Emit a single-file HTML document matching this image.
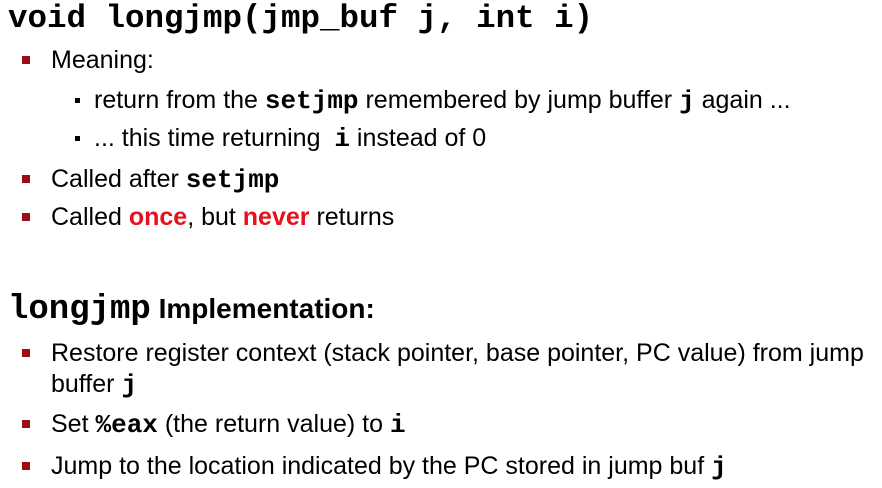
<!DOCTYPE html>
<html><head><meta charset="utf-8"><style>
body{margin:0;width:882px;height:488px;background:#fff;overflow:hidden;position:relative;font-family:"Liberation Sans",sans-serif;color:#000}
.l{position:absolute;white-space:nowrap;font-size:25px;line-height:28px;letter-spacing:0}
.m{font-family:"Liberation Mono",monospace;font-weight:bold;font-size:26px;letter-spacing:0}
.b{position:absolute;width:8px;height:8px;background:#9b0d13}
.s{position:absolute;width:5px;height:5px;background:#000}
.r{color:#e8101a;font-weight:bold}
</style></head><body>
<div class="l m" style="left:8px;top:-1px;font-size:32.5px;line-height:40px">void longjmp(jmp_buf j, int i)</div>

<div class="b" style="left:22px;top:56px"></div>
<div class="l" style="left:51px;top:46px">Meaning:</div>
<div class="s" style="left:75px;top:98px"></div>
<div class="l" style="left:94px;top:86px">return from the <span class="m">setjmp</span> remembered by jump buffer <span class="m">j</span> again ...</div>
<div class="s" style="left:75px;top:136px"></div>
<div class="l" style="left:94px;top:124px">... this time returning &nbsp;<span class="m">i</span> instead of 0</div>
<div class="b" style="left:22px;top:175px"></div>
<div class="l" style="left:51px;top:165px">Called after <span class="m">setjmp</span></div>
<div class="b" style="left:22px;top:213px"></div>
<div class="l" style="left:51px;top:203px">Called <span class="r">once</span>, but <span class="r">never</span> returns</div>

<div class="l" style="left:8px;top:292px;font-size:28px;line-height:34px;font-weight:bold"><span class="m" style="font-size:34px">longjmp</span> Implementation:</div>
<div class="b" style="left:22px;top:349px"></div>
<div class="l" style="left:51px;top:339px">Restore register context (stack pointer, base pointer, PC value) from jump</div>
<div class="l" style="left:51px;top:370px">buffer <span class="m">j</span></div>
<div class="b" style="left:22px;top:420px"></div>
<div class="l" style="left:51px;top:410px">Set <span class="m">%eax</span> (the return value) to <span class="m">i</span></div>
<div class="b" style="left:22px;top:462px"></div>
<div class="l" style="left:51px;top:452px">Jump to the location indicated by the PC stored in jump buf <span class="m">j</span></div>
</body></html>
